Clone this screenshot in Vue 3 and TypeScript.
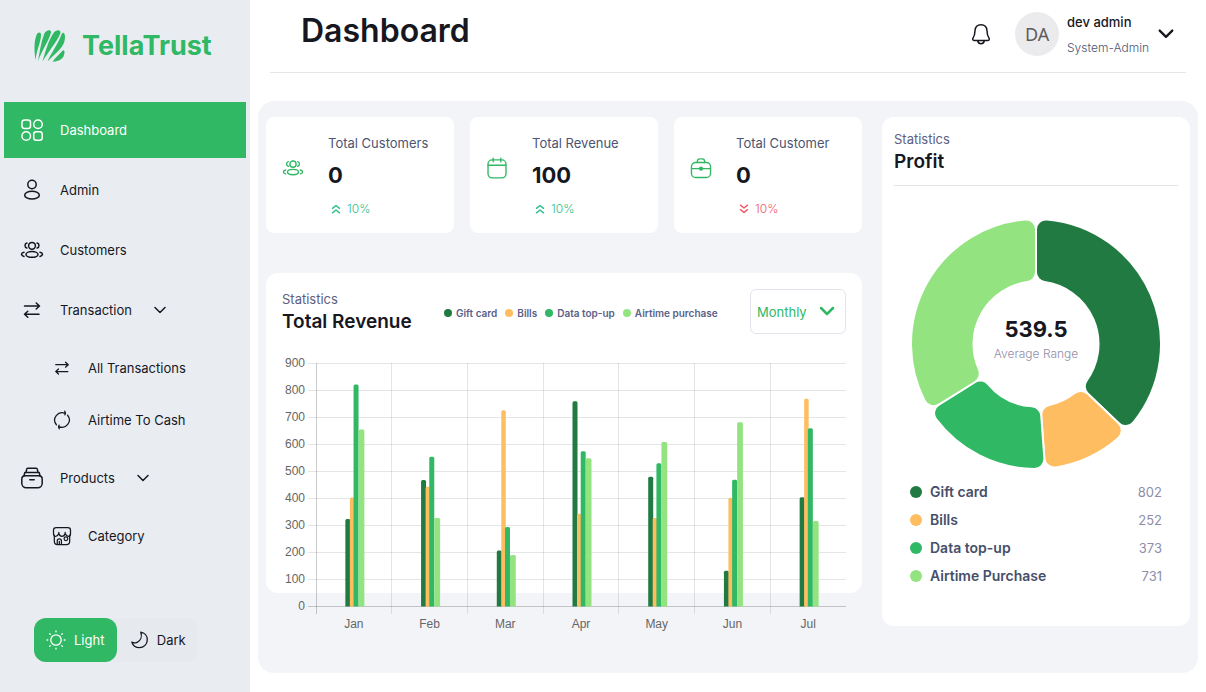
<script setup lang="ts">
import { computed, ref } from 'vue'

interface NavItem {
  label: string
  icon: string
  sub?: boolean
  active?: boolean
  expandable?: boolean
}

interface Series {
  name: string
  legend: string
  color: string
  total: number
  offset: number
  width: number
  values: number[]
}

const navItems: NavItem[] = [
  { label: 'Dashboard', icon: 'grid', active: true },
  { label: 'Admin', icon: 'user' },
  { label: 'Customers', icon: 'people' },
  { label: 'Transaction', icon: 'swap', expandable: true },
  { label: 'All Transactions', icon: 'swap', sub: true },
  { label: 'Airtime To Cash', icon: 'cycle', sub: true },
  { label: 'Products', icon: 'box', expandable: true },
  { label: 'Category', icon: 'shop', sub: true },
]

const stats = [
  { label: 'Total Customers', value: '0', change: '10%', up: true, icon: 'people' },
  { label: 'Total Revenue', value: '100', change: '10%', up: true, icon: 'calendar' },
  { label: 'Total Customer', value: '0', change: '10%', up: false, icon: 'case' },
]

const months = ['Jan', 'Feb', 'Mar', 'Apr', 'May', 'Jun', 'Jul']

const series: Series[] = [
  { name: 'Gift card', legend: 'Gift card', color: '#217a42', total: 802, offset: -8.5, width: 5, values: [322, 467, 206, 758, 479, 131, 403] },
  { name: 'Bills', legend: 'Bills', color: '#ffbd61', total: 252, offset: -4, width: 4.5, values: [402, 442, 725, 342, 326, 401, 768] },
  { name: 'Data top-up', legend: 'Data top-up', color: '#30b864', total: 373, offset: -0.3, width: 5, values: [820, 553, 293, 573, 529, 468, 658] },
  { name: 'Airtime purchase', legend: 'Airtime Purchase', color: '#93e481', total: 731, offset: 4.7, width: 5.8, values: [654, 326, 189, 547, 607, 681, 315] },
]

const period = ref('Monthly')
const theme = ref<'light' | 'dark'>('light')

const plotLeft = 34
const plotRight = 564
const plotTop = 13
const plotBottom = 256
const step = (plotRight - plotLeft) / months.length
const ticks = Array.from({ length: 10 }, (_, i) => i * 100)
const yOf = (v: number) => plotBottom - v * 0.27
const lineX = (i: number) => Math.floor(plotLeft + i * step) + 0.5

function barPath(s: Series, i: number): string {
  const x = plotLeft + step * (i + 0.5) + s.offset
  const y = yOf(s.values[i])
  const r = 1.5
  return `M${x} ${plotBottom + 0.5}V${y + r}q0 ${-r} ${r} ${-r}h${s.width - 2 * r}q${r} 0 ${r} ${r}V${plotBottom + 0.5}Z`
}

const outer = 125
const inner = 62.5
const corner = 10

function polar(radius: number, angle: number): string {
  return `${(outer + radius * Math.sin(angle)).toFixed(2)} ${(outer - radius * Math.cos(angle)).toFixed(2)}`
}

const slices = computed(() => {
  const sum = series.reduce((n, s) => n + s.total, 0)
  const dOut = Math.asin(corner / (outer - corner))
  const dIn = Math.asin(corner / (inner + corner))
  const lOut = Math.sqrt((outer - corner) ** 2 - corner ** 2)
  const lIn = Math.sqrt((inner + corner) ** 2 - corner ** 2)
  let start = 0
  return series.map((s) => {
    const a = start
    const b = start + (s.total / sum) * Math.PI * 2
    start = b
    const d = [
      `M${polar(lOut, a)}`,
      `A${corner} ${corner} 0 0 1 ${polar(outer, a + dOut)}`,
      `A${outer} ${outer} 0 0 1 ${polar(outer, b - dOut)}`,
      `A${corner} ${corner} 0 0 1 ${polar(lOut, b)}`,
      `L${polar(lIn, b)}`,
      `A${corner} ${corner} 0 0 1 ${polar(inner, b - dIn)}`,
      `A${inner} ${inner} 0 0 0 ${polar(inner, a + dIn)}`,
      `A${corner} ${corner} 0 0 1 ${polar(lIn, a)}`,
      'Z',
    ].join('')
    return { d, color: s.color, name: s.name }
  })
})

const icons: Record<string, string> = {
  grid: '<rect x="2" y="2" width="8.5" height="8.5" rx="2.5"/><circle cx="18" cy="6.2" r="4.3"/><circle cx="6.2" cy="18" r="4.3"/><rect x="13.7" y="13.7" width="8.5" height="8.5" rx="2.5"/>',
  user: '<circle cx="12" cy="6.5" r="4.2"/><ellipse cx="12" cy="17.2" rx="7.3" ry="3.9"/>',
  people: '<circle cx="12" cy="7.8" r="3.4"/><ellipse cx="12" cy="16.4" rx="6" ry="2.9"/><path d="M6.9 5.1C4.4 5.6 4.4 9.6 6.9 10.1M17.1 5.1c2.5.5 2.5 4.5 0 5M4 14.2c-3.3.8-3.3 3.4 0 4.2M20 14.2c3.3.8 3.3 3.4 0 4.2"/>',
  swap: '<path d="M4.500 8h15M16.200 5 19.500 8l-3.300 3M19 16.200H4.500M7.800 13.200l-3.300 3 3.300 3"/>',
  cycle: '<path d="M15.800 4.100A8.800 8.800 0 0 0 5.300 17.700M8.200 19.900A8.800 8.800 0 0 0 18.700 6.300M15.300 1.300l.9 2.900-.7 1.600M8.700 22.700l-.9-2.900.7-1.600"/>',
  box: '<path d="M4 9.800 4.800 6.500h14.400l.8 3.300M6 6.500l.7-3.300c.1-.7.500-1 1.200-1h8.200c.7 0 1.100.3 1.200 1l.7 3.300"/><path d="M5.300 9.800h13.400c2.200 0 3.500 1.400 3.500 3.400v4.100a4.500 4.500 0 0 1-4.500 4.500H6.300a4.500 4.500 0 0 1-4.500-4.500v-4.100c0-2 1.300-3.400 3.500-3.400ZM9.800 13.800h4.400"/>',
  shop: '<path d="M2.800 11v7.500c0 2.300 1.500 3.700 3.800 3.700h10.800c2.300 0 3.800-1.400 3.800-3.700V11"/><path d="M5 1.800h14c1.800 0 3.200 1.300 3.200 3.100v4.300c0 1.900-1.100 3.200-2.700 3.200-1.700 0-2.700-1.100-3.700-3.400-.7 2.200-2 3.400-3.800 3.400s-3.100-1.200-3.800-3.400c-1 2.300-2 3.400-3.700 3.400-1.600 0-2.700-1.300-2.700-3.200V4.900c0-1.800 1.400-3.100 3.200-3.100ZM8.200 7.500V9M15.800 7.500V9M6.300 21.700V18c0-1.700 1-2.500 2.500-2.500s2.500.8 2.500 2.500v3.700M8.800 18.500v3"/><circle cx="16.700" cy="15.300" r="2.200"/>',
  calendar: '<rect x="2.200" y="3.200" width="19.600" height="19.600" rx="4.500"/><path d="M2.500 9h19M7.800 1.200v4M16.200 1.200v4"/>',
  case: '<rect x="1.600" y="6" width="20.800" height="16.400" rx="4.500"/><path d="M8 6V5c0-1.900 1-3 2.800-3h2.400C15 2 16 3.100 16 5v1M2 12.700h20"/><circle cx="12" cy="12.700" r="1.500" fill="currentColor"/>',
}
</script>

<template>
  <div class="app">
    <aside class="sidebar">
      <a class="brand" href="#">
        <svg class="brand-mark" viewBox="0 0 32 32" aria-hidden="true">
          <path d="M1.500 30C.300 22-.300 12 2.500 5 3.800 2 7.200 1.600 7 5.200 6.600 13 2.500 20 1.500 30Z" />
          <path d="M4 31.500C5.600 22 7 12 10.200 4c1.800-4.400 8-5 6.600-.700C14.200 12 8 20 4 31.500Z" />
          <path d="M8.500 31.500C11 23 14.500 10 19.500 3c3-4.300 8.600-3.300 6.500 1.200C22.500 12 14.500 21.500 8.500 31.500Z" />
          <path d="M13.500 31.500C16 25 23.500 15 27.300 5c1-3.200 3-2.500 3.500 0C32.500 16.500 22 22 13.500 31.500Z" />
          <path d="M18.500 31.700C21.500 27.500 25.500 24 28 21.200c1.600-2 2.700-1 2.500 1.400C30.200 28.500 25.500 31.500 18.500 31.700Z" />
        </svg>
        <span>TellaTrust</span>
      </a>

      <nav class="nav" aria-label="Main">
        <component
          :is="item.expandable ? 'button' : 'a'"
          v-for="item in navItems"
          :key="item.label"
          class="nav-item"
          :class="{ active: item.active, sub: item.sub, spaced: item.expandable }"
          :href="item.expandable ? undefined : '#'"
          :type="item.expandable ? 'button' : undefined"
          :aria-expanded="item.expandable ? 'true' : undefined"
        >
          <svg class="icon" viewBox="0 0 24 24" aria-hidden="true" v-html="icons[item.icon]"></svg>
          <span>{{ item.label }}</span>
          <svg v-if="item.expandable" class="nav-caret" viewBox="0 0 12 12" aria-hidden="true">
            <path d="M1 3.500 6 8.500l5-5" />
          </svg>
        </component>
      </nav>

      <div class="theme" role="group" aria-label="Theme">
        <button type="button" :class="{ on: theme === 'light' }" @click="theme = 'light'">
          <svg class="theme-icon" viewBox="0 0 20 20" aria-hidden="true">
            <circle cx="10" cy="10" r="5.200" />
            <path d="M10 1v.8M10 18.200v.8M1 10h.8M18.200 10h.8M3.700 3.700l.5.500M15.800 15.800l.5.500M3.700 16.300l.5-.5M15.800 4.200l.5-.5" />
          </svg>
          Light
        </button>
        <button type="button" :class="{ on: theme === 'dark' }" @click="theme = 'dark'">
          <svg class="theme-icon" viewBox="0 0 20 20" aria-hidden="true">
            <path d="M11.800 2.200c3.800.5 6.500 3.600 6.500 7.600a7.900 7.900 0 0 1-7.900 7.900c-3.500 0-6.600-2.300-7.600-5.600 1.400.9 3.500 1 5.300.2 3.600-1.600 5.200-5.600 3.700-10.100Z" />
          </svg>
          Dark
        </button>
      </div>
    </aside>

    <main class="main">
      <header class="header">
        <h1>Dashboard</h1>
        <div class="account">
          <button class="bell" type="button" aria-label="Notifications">
            <svg viewBox="0 0 24 24" aria-hidden="true">
              <path d="M12 2.800c-3.600 0-5.800 2.500-6 6-.1 3.300-.5 5-1.800 6.900-1 1.500-.4 2.900 1.300 2.900h13c1.700 0 2.300-1.400 1.300-2.900-1.300-1.900-1.700-3.600-1.800-6.900-.2-3.500-2.400-6-6-6ZM8.800 19c.3 1.700 1.500 2.700 3.200 2.700s2.900-1 3.200-2.700" />
            </svg>
          </button>
          <div class="avatar" aria-hidden="true">DA</div>
          <div class="who">
            <span class="who-name">dev admin</span>
            <span class="who-role">System-Admin</span>
          </div>
          <button class="account-caret" type="button" aria-label="Account menu">
            <svg viewBox="0 0 14 14" aria-hidden="true"><path d="m1.500 4 5.500 5.500L12.500 4" /></svg>
          </button>
        </div>
      </header>

      <section class="panel">
        <div class="left">
          <div class="stats">
            <article v-for="stat in stats" :key="stat.label" class="stat">
              <svg class="icon stat-icon" viewBox="0 0 24 24" aria-hidden="true" v-html="icons[stat.icon]"></svg>
              <div class="stat-body">
                <span class="stat-label">{{ stat.label }}</span>
                <strong class="stat-value">{{ stat.value }}</strong>
                <span class="stat-change" :class="{ down: !stat.up }">
                  <svg viewBox="0 0 10 10" aria-hidden="true">
                    <path :d="stat.up ? 'M1.500 4.300 5 1.500l3.500 2.800M1.500 8.800 5 6l3.500 2.800' : 'M1.500 1.200 5 4l3.500-2.800M1.500 5.700 5 8.500l3.500-2.800'" />
                  </svg>
                  {{ stat.change }}
                </span>
              </div>
            </article>
          </div>

          <article class="revenue">
            <div class="revenue-head">
              <div>
                <span class="eyebrow">Statistics</span>
                <h2>Total Revenue</h2>
              </div>
              <ul class="legend">
                <li v-for="s in series" :key="s.name">
                  <i :style="{ background: s.color }"></i>{{ s.name }}
                </li>
              </ul>
              <div class="period">
                <select v-model="period" aria-label="Period">
                  <option>Monthly</option>
                  <option>Weekly</option>
                  <option>Yearly</option>
                </select>
                <svg viewBox="0 0 16 16" aria-hidden="true"><path d="m2 5 6 6 6-6" /></svg>
              </div>
            </div>
            <svg class="bars" viewBox="0 0 564 286" role="img" aria-label="Total revenue by month">
              <g class="grid-lines">
                <path v-for="t in ticks" :key="t" :class="{ axis: t === 0 }" :d="`M${plotLeft - 8} ${yOf(t) + 0.5}H${plotRight}`" />
                <path v-for="(m, i) in months" :key="m" :class="{ axis: i === 0 }" :d="`M${lineX(i)} ${plotTop}V${plotBottom + 8}`" />
              </g>
              <g v-for="s in series" :key="s.name" :fill="s.color">
                <path v-for="(m, i) in months" :key="m" :d="barPath(s, i)" />
              </g>
              <g class="labels">
                <text v-for="t in ticks" :key="t" x="23" :y="yOf(t) + 4" text-anchor="end">{{ t }}</text>
                <text v-for="(m, i) in months" :key="m" :x="plotLeft + step * (i + 0.5)" y="278" text-anchor="middle">{{ m }}</text>
              </g>
            </svg>
          </article>
        </div>

        <article class="profit">
          <div class="profit-head">
            <span class="eyebrow">Statistics</span>
            <h2>Profit</h2>
          </div>
          <div class="donut">
            <svg viewBox="0 0 250 250" role="img" aria-label="Profit by product">
              <path v-for="s in slices" :key="s.name" :d="s.d" :fill="s.color" />
            </svg>
            <div class="donut-text">
              <strong>539.5</strong>
              <span>Average Range</span>
            </div>
          </div>
          <ul class="totals">
            <li v-for="s in series" :key="s.name">
              <i :style="{ background: s.color }"></i>
              <b>{{ s.legend }}</b>
              <span>{{ s.total }}</span>
            </li>
          </ul>
        </article>
      </section>
    </main>
  </div>
</template>

<style>
body {
  margin: 0;
  background: #fff;
}
</style>

<style scoped>
.app {
  display: flex;
  min-height: 100vh;
  box-sizing: border-box;
  font-family: Inter, "Open Sans", sans-serif;
  font-size: 13px;
  line-height: 20px;
  color: #16171f;
}
button,
select {
  font: inherit;
  color: inherit;
  background: none;
  border: 0;
  padding: 0;
  margin: 0;
  cursor: pointer;
}
a {
  color: inherit;
  text-decoration: none;
}
ul {
  list-style: none;
  margin: 0;
  padding: 0;
}
h1,
h2 {
  margin: 0;
}
svg {
  flex: none;
  fill: none;
  stroke: currentColor;
  stroke-linecap: round;
  stroke-linejoin: round;
}
.sidebar {
  flex: none;
  width: 250px;
  box-sizing: border-box;
  padding: 29px 4px 0;
  background: #e9edf2;
}
.brand {
  display: flex;
  align-items: center;
  gap: 16px;
  height: 34px;
  padding: 0 30px;
  margin-bottom: 39px;
  color: #30b864;
  font-size: 27px;
  font-weight: 700;
}
.brand-mark {
  width: 32px;
  height: 32px;
  fill: currentColor;
  stroke: none;
}
.nav {
  display: flex;
  flex-direction: column;
}
.nav-item {
  display: flex;
  align-items: center;
  gap: 16px;
  height: 56px;
  padding: 0 16px;
  margin-bottom: 4px;
  text-align: left;
}
.nav-item.active {
  background: #30b864;
  color: #fff;
}
.nav-item.sub {
  height: 52px;
  padding: 0 48px;
  margin-bottom: 0;
}
.nav-item.sub + .spaced {
  margin-top: 4px;
}
.icon {
  width: 24px;
  height: 24px;
  stroke-width: 1.5;
}
.sub .icon {
  width: 20px;
  height: 20px;
}
.nav-caret {
  width: 12px;
  height: 12px;
  margin-left: 6px;
  stroke-width: 1.5;
}
.theme {
  display: flex;
  width: 164px;
  margin: 56px 0 0 30px;
  border-radius: 12px;
  background: #e6e9ee;
}
.theme button {
  display: flex;
  flex: 1 0 auto;
  align-items: center;
  gap: 8px;
  height: 44px;
  padding: 0 12px;
  border-radius: 12px;
}
.theme button.on {
  background: #30b864;
  color: #fff;
}
.theme-icon {
  width: 20px;
  height: 20px;
  stroke-width: 1.3;
}
.main {
  flex: 1;
  min-width: 0;
}
.header {
  display: flex;
  justify-content: space-between;
  height: 72px;
  margin: 0 20px;
  padding: 0 12px 0 31px;
  border-bottom: 1px solid #e4e5e8;
}
h1 {
  margin-top: 10px;
  font-size: 32px;
  line-height: 42px;
  font-weight: 600;
}
.account {
  display: flex;
  align-items: center;
  height: 68px;
}
.bell {
  width: 24px;
  height: 24px;
}
.bell svg {
  width: 24px;
  height: 24px;
  stroke-width: 1.5;
}
.avatar {
  display: grid;
  place-items: center;
  width: 44px;
  height: 44px;
  margin: 0 8px 0 22px;
  border-radius: 50%;
  background: #ebebed;
  color: #5c5c5e;
  font-family: "Noto Sans", sans-serif;
  font-size: 18px;
}
.who {
  display: flex;
  flex-direction: column;
  gap: 6px;
  padding-top: 2px;
}
.who-name {
  font-weight: 500;
}
.who-role {
  font-size: 12px;
  font-weight: 300;
  color: #4b5573;
}
.account-caret {
  display: flex;
  margin-left: 9px;
}
.account-caret svg {
  width: 16px;
  height: 16px;
  stroke-width: 2;
}
.panel {
  display: grid;
  grid-template-columns: minmax(0, 1fr) 308px;
  gap: 20px;
  align-items: start;
  margin: 28px 8px 0;
  padding: 16px 8px 47px;
  border-radius: 16px;
  background: #f2f4f8;
}
.left {
  display: grid;
  gap: 40px;
}
.stats {
  display: grid;
  grid-template-columns: repeat(3, minmax(0, 1fr));
  gap: 16px;
}
.stat {
  display: flex;
  align-items: center;
  gap: 24px;
  box-sizing: border-box;
  height: 116px;
  padding: 0 16px;
  border-radius: 8px;
  background: #fff;
}
.stat-icon {
  width: 22px;
  height: 22px;
  margin-top: -14px;
  color: #30b864;
}
.stat-body {
  display: flex;
  flex-direction: column;
}
.stat-label {
  color: #4b5573;
}
.stat-value {
  margin: 6px 0 10px;
  font-size: 22px;
  line-height: 32px;
  font-weight: 700;
}
.stat-change {
  display: flex;
  align-items: center;
  gap: 6px;
  padding-left: 3px;
  font-size: 12px;
  line-height: 16px;
  font-weight: 300;
  color: #30c08a;
}
.stat-change.down {
  color: #f05a6a;
}
.stat-change svg {
  width: 10px;
  height: 10px;
  stroke-width: 1.5;
}
.revenue {
  box-sizing: border-box;
  height: 320px;
  padding: 16px;
  border-radius: 12px;
  background: #fff;
}
.revenue-head {
  display: flex;
  align-items: flex-start;
  justify-content: space-between;
}
.eyebrow {
  display: block;
  color: #5b6080;
}
h2 {
  font-size: 19px;
  line-height: 26px;
  font-weight: 600;
}
.legend {
  display: flex;
  gap: 8px;
  margin-top: 16px;
  font-size: 10px;
  line-height: 16px;
  font-weight: 600;
  color: #5b5f88;
}
.legend li {
  display: flex;
  align-items: center;
  gap: 4px;
}
.legend i {
  width: 8px;
  height: 8px;
  border-radius: 50%;
}
.period {
  position: relative;
  width: 96px;
  color: #30b864;
}
.period select {
  display: block;
  width: 100%;
  height: 45px;
  padding: 0 6px;
  appearance: none;
  border: 1px solid #e4e5ec;
  border-radius: 6px;
}
.period svg {
  position: absolute;
  top: 14px;
  right: 11px;
  width: 16px;
  height: 16px;
  stroke-width: 2.5;
  pointer-events: none;
}
.bars {
  display: block;
  width: 100%;
  margin-top: 15px;
  overflow: visible;
  stroke: none;
}
.grid-lines path {
  stroke: rgba(0, 0, 0, 0.1);
  stroke-linecap: butt;
}
.grid-lines .axis {
  stroke: rgba(0, 0, 0, 0.2);
}
.labels text {
  fill: #666;
  font-family: "Liberation Sans", Arial, sans-serif;
  font-size: 12px;
}
.profit {
  padding: 12px 12px 36px;
  border-radius: 12px;
  background: #fff;
}
.profit-head {
  padding-bottom: 10px;
  border-bottom: 1px solid #e4e5e8;
}
.donut {
  display: grid;
  place-items: center;
  padding: 33px 0 9px;
}
.donut > * {
  grid-area: 1 / 1;
}
.donut > svg {
  width: 250px;
  height: 250px;
  stroke: #fff;
  stroke-width: 2;
}
.donut-text {
  display: flex;
  flex-direction: column;
  align-items: center;
  margin-top: -10px;
}
.donut-text strong {
  font-size: 22px;
  line-height: 30px;
}
.donut-text span {
  font-size: 12px;
  font-weight: 300;
  color: #8e8ea9;
}
.totals {
  padding: 0 16px;
}
.totals li {
  display: flex;
  align-items: center;
  height: 28px;
}
.totals i {
  width: 12px;
  height: 12px;
  margin-right: 8px;
  border-radius: 50%;
}
.totals b {
  flex: 1;
  font-size: 14px;
  font-weight: 600;
  color: #465069;
}
.totals span {
  color: #8e8ea9;
}
</style>
